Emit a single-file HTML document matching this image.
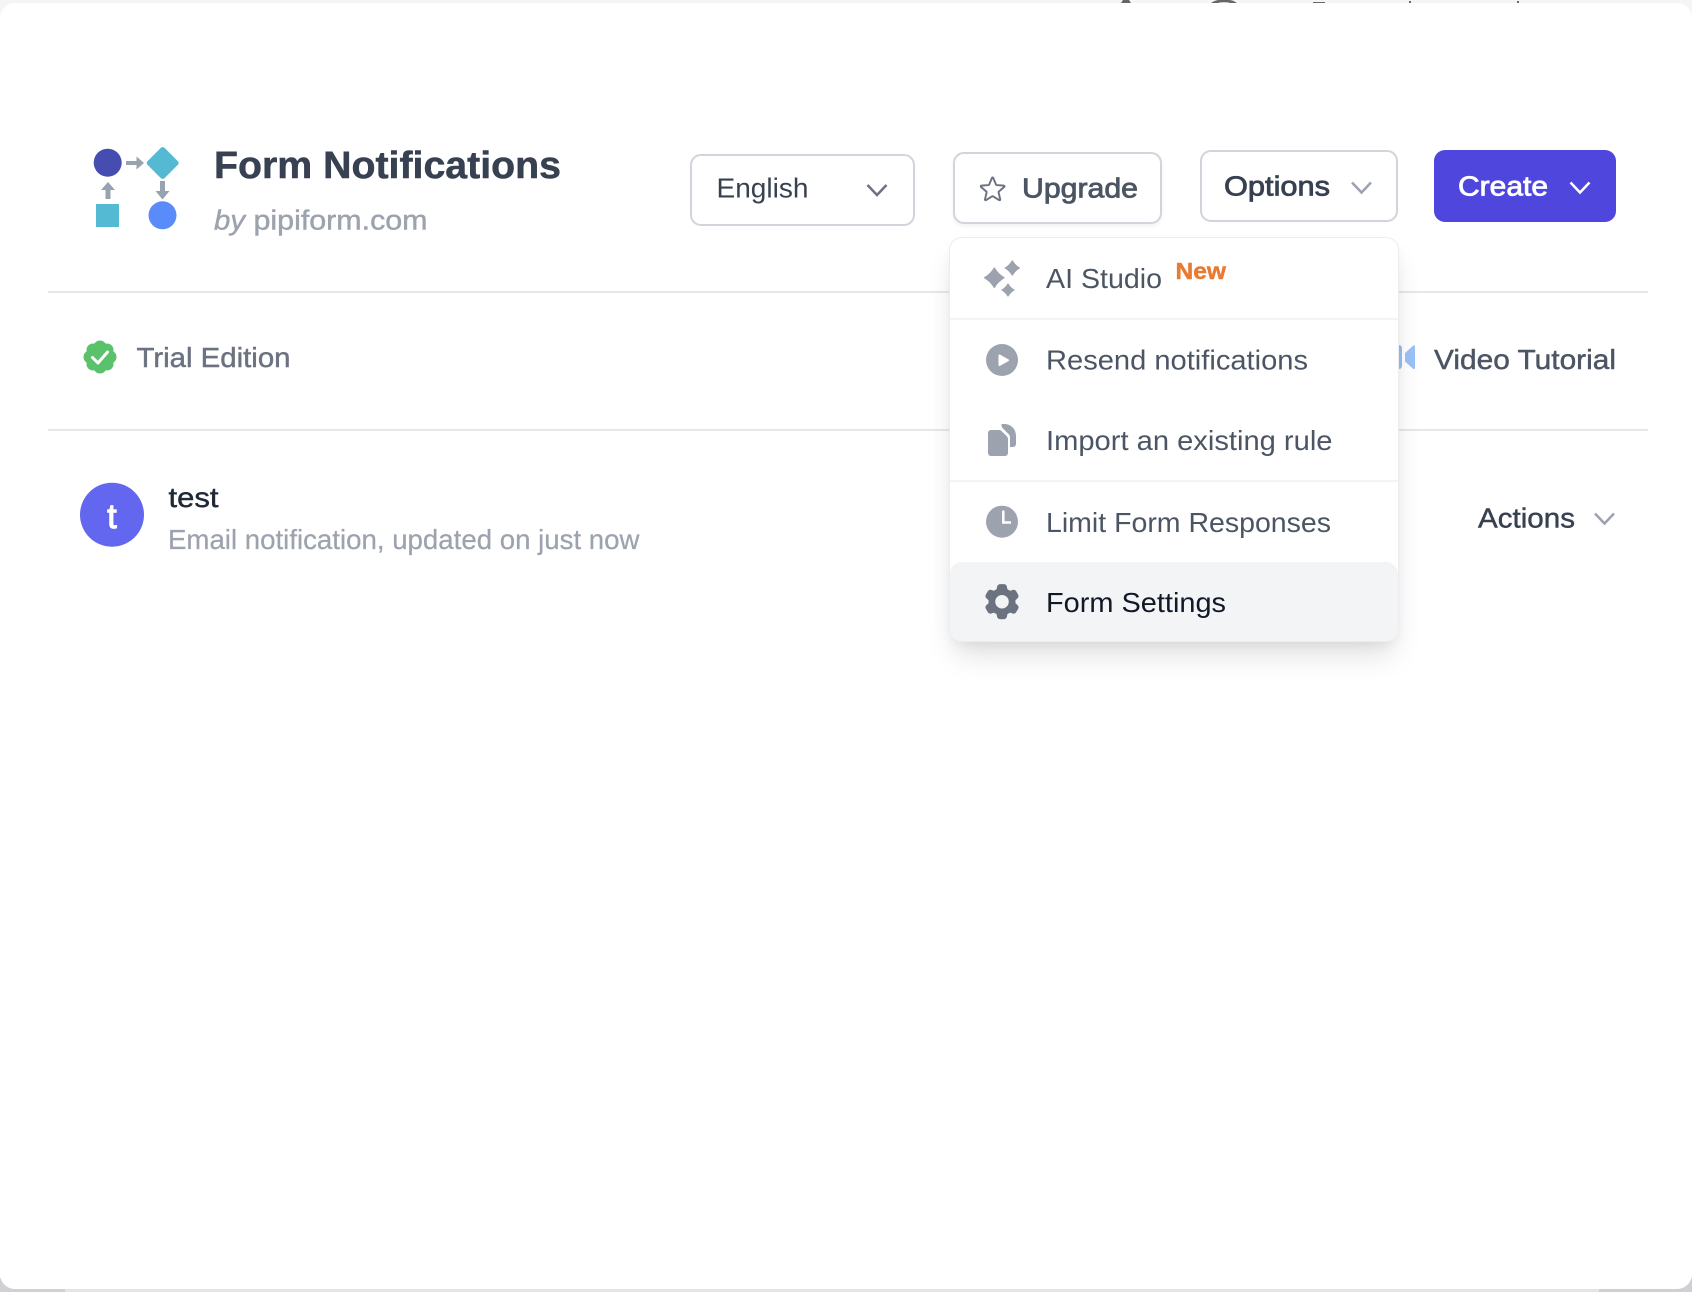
<!DOCTYPE html>
<html lang="en"><head><meta charset="utf-8"><title>Form Notifications</title>
<style>
html,body{margin:0;padding:0;width:1692px;height:1292px;overflow:hidden;background:#f5f5f6}
body{position:relative;font-family:"Liberation Sans",sans-serif}
.bl,.br,.bm{position:absolute;bottom:0;height:14px}
.bl{left:0;width:65px;background:#d0d0d5}.bm{left:65px;width:1534px;background:#e4e4e5}.br{left:1599px;width:93px;background:#cfcfd6}
.panel{position:absolute;left:0;top:3px;width:1692px;height:1286px;background:#fff;border-radius:15px}
.line{position:absolute;left:48px;width:1600px;height:2px;background:#e5e7eb}
.btn{position:absolute;box-sizing:border-box;background:#fff;border:2px solid #d1d5db;border-radius:11px}
.menu{position:absolute;left:949px;top:237px;width:450px;height:405px;box-sizing:border-box;background:#fff;border:1.5px solid #ededef;border-radius:13px;box-shadow:0 18px 30px -6px rgba(0,0,0,.13),0 6px 12px -3px rgba(0,0,0,.06)}
.sep{position:absolute;left:0;right:0;height:2px;background:#f3f4f6}
.hi{position:absolute;left:0;right:0;bottom:0;height:79.500px;background:#f3f4f6;border-radius:12px}
svg{position:absolute;left:0;top:0}
text{font-family:"Liberation Sans",sans-serif;font-size:28px}
.m{stroke-width:.45px}
.s{stroke-width:.8px}
</style></head><body>
<div class="bl"></div><div class="bm"></div><div class="br"></div>
<div class="panel"></div>
<div class="line" style="top:291px"></div>
<div class="line" style="top:429px"></div>

<!-- behind menu -->
<svg width="1692" height="1292" viewBox="0 0 1692 1292">
<g fill="#666"><path d="M1121 3l2-3h6l2 3z"/><path d="M1211 3c3-2 6-3 8-3h10c3 0 5 1 8 3h-7c-2-1-10-1-12 0z"/><rect x="1313" y="2" width="12" height="1"/><rect x="1409" y="1" width="2" height="2"/><rect x="1517" y="1" width="2" height="2"/></g>
<path d="M1390 345h9a3 3 0 0 1 3 3v18a3 3 0 0 1-3 3h-9z" fill="#93c0f5"/>
<path d="M1415 346.500v21.500c0 1-1 1.500-2 .8l-8-7.300v-8.500l8-7.300c1-.7 2-.2 2 .3z" fill="#9ac2f6"/>
</svg>

<div class="btn" style="left:690px;top:154px;width:225px;height:72px"></div>
<div class="btn" style="left:953px;top:152px;width:209px;height:72px;box-shadow:0 2px 4px rgba(0,0,0,.06)"></div>
<div class="btn" style="left:1200px;top:150px;width:198px;height:72px"></div>
<div class="btn" style="left:1434px;top:150px;width:182px;height:72px;background:#4f46dd;border:0"></div>

<div class="menu">
<div class="sep" style="top:80px"></div>
<div class="sep" style="top:241.500px"></div>
<div class="hi"></div>
</div>

<svg width="1692" height="1292" viewBox="0 0 1692 1292">
<!-- logo -->
<ellipse cx="107.700" cy="162.700" rx="14" ry="14" fill="#454eb0"/>
<rect x="-12" y="-12" width="24" height="24" rx="2.500" transform="translate(162.700 163) rotate(45)" fill="#54b9d2"/>
<rect x="96" y="204" width="23" height="23" fill="#54b9d2"/>
<circle cx="162.500" cy="215.300" r="14" fill="#5a8bfb"/>
<g fill="#97a3ae">
<path d="M126 161h10.500v-4.500l7.500 6.500-7.500 6.500v-4.500h-10.500z"/>
<path d="M105.500 199v-9h-4.500l7-8 7 8h-4.500v9z"/>
<path d="M160 181h5v10h4.500l-7 8.500-7-8.500h4.500z"/>
</g>
<!-- title -->
<text x="214" y="178" font-size="38" font-weight="700" fill="#374151" stroke="#374151" stroke-width=".5" style="font-size:38px" textLength="347" lengthAdjust="spacingAndGlyphs">Form Notifications</text>
<text x="214" y="229.500" fill="#9ca3af" stroke="#9ca3af" class="m" font-style="italic" textLength="31" lengthAdjust="spacingAndGlyphs">by</text>
<text x="253.500" y="229.500" fill="#9ca3af" stroke="#9ca3af" class="m" textLength="174" lengthAdjust="spacingAndGlyphs">pipiform.com</text>

<!-- English -->
<text x="716.500" y="197.500" fill="#374151" textLength="92" lengthAdjust="spacingAndGlyphs">English</text>
<path d="M867.500 185l9.500 10 9.500-10" fill="none" stroke="#6b7280" stroke-width="2.500"/>
<!-- Upgrade -->
<path transform="translate(977 173.400) scale(1.300)" d="M11.480 3.499a.562.562 0 011.040 0l2.125 5.111a.563.563 0 00.475.345l5.518.442c.499.040.701.663.321.988l-4.204 3.602a.563.563 0 00-.182.557l1.285 5.385a.562.562 0 01-.840.610l-4.725-2.885a.562.562 0 00-.586 0L6.982 20.540a.562.562 0 01-.840-.610l1.285-5.386a.562.562 0 00-.182-.557l-4.204-3.602a.563.563 0 01.321-.988l5.518-.442a.563.563 0 00.475-.345L11.480 3.500z" fill="none" stroke="#6b7280" stroke-width="1.500"/>
<text x="1022" y="197.500" fill="#4b5563" stroke="#4b5563" class="s" textLength="116" lengthAdjust="spacingAndGlyphs">Upgrade</text>
<!-- Options -->
<text x="1224" y="195.500" fill="#374151" stroke="#374151" class="s" textLength="106" lengthAdjust="spacingAndGlyphs">Options</text>
<path d="M1352 182.500l9.500 10 9.500-10" fill="none" stroke="#9ca3af" stroke-width="2.500"/>
<!-- Create -->
<text x="1458" y="195.500" fill="#fff" stroke="#fff" class="s" textLength="90" lengthAdjust="spacingAndGlyphs">Create</text>
<path d="M1570.500 182.500l9.500 10 9.500-10" fill="none" stroke="#fff" stroke-width="2.500"/>

<!-- Trial -->
<g fill="#5ac26a"><circle cx="100" cy="357" r="14"/>
<circle cx="100" cy="347" r="6.500"/><circle cx="107" cy="350" r="6.500"/><circle cx="110" cy="357" r="6.500"/><circle cx="107" cy="364" r="6.500"/><circle cx="100" cy="367" r="6.500"/><circle cx="93" cy="364" r="6.500"/><circle cx="90" cy="357" r="6.500"/><circle cx="93" cy="350" r="6.500"/></g>
<path d="M92.500 357.500l5.500 5.500 9.500-11" fill="none" stroke="#fff" stroke-width="3" stroke-linecap="round" stroke-linejoin="round"/>
<text x="136.500" y="367" fill="#6b7280" stroke="#6b7280" class="m" textLength="154" lengthAdjust="spacingAndGlyphs">Trial Edition</text>
<text x="1434" y="369" fill="#4b5563" stroke="#4b5563" class="m" textLength="182" lengthAdjust="spacingAndGlyphs">Video Tutorial</text>

<!-- list row -->
<circle cx="112" cy="514.700" r="32" fill="#6366ee"/>
<text x="112" y="528" text-anchor="middle" fill="#fff" stroke="#fff" stroke-width="1.200" style="font-size:34px">t</text>
<text x="168.500" y="507" fill="#1f2937" stroke="#1f2937" class="m" textLength="50" lengthAdjust="spacingAndGlyphs">test</text>
<text x="168" y="549" fill="#9ca3af" stroke="#9ca3af" stroke-width=".25" textLength="471.500" lengthAdjust="spacingAndGlyphs">Email notification, updated on just now</text>
<text x="1478" y="527.500" fill="#374151" stroke="#374151" class="m" textLength="97" lengthAdjust="spacingAndGlyphs">Actions</text>
<path d="M1595 513.500l9.500 10 9.500-10" fill="none" stroke="#9ca3af" stroke-width="2.500"/>

<!-- menu icons -->
<g fill="#9ca3af" stroke="#9ca3af" stroke-width="1.500" stroke-linejoin="round">
<path transform="translate(994.300 277.700)" d="M0-9.500Q3.500-3.500 9.500 0Q3.500 3.500 0 9.500Q-3.500 3.500-9.500 0Q-3.500-3.500 0-9.500Z"/>
<path transform="translate(1012.300 268) scale(.75)" d="M0-9.500Q3.500-3.500 9.500 0Q3.500 3.500 0 9.500Q-3.500 3.500-9.500 0Q-3.500-3.500 0-9.500Z"/>
<path transform="translate(1008 290) scale(.65)" d="M0-9.500Q3.500-3.500 9.500 0Q3.500 3.500 0 9.500Q-3.500 3.500-9.500 0Q-3.500-3.500 0-9.500Z"/>
</g>
<circle cx="1002" cy="360" r="16" fill="#9ca3af"/>
<path d="M998.500 355.500c0-.8.800-1.300 1.500-.9l8.500 4.800c.7.400.7 1.300 0 1.700l-8.500 4.800c-.7.400-1.500-.100-1.500-.9z" fill="#fff"/>
<path d="M991 430h8c1 0 2 .5 2.500 1l5.500 5.500c.6.600 1 1.500 1 2.500v14a3 3 0 0 1-3 3h-14a3 3 0 0 1-3-3v-20a3 3 0 0 1 3-3z" fill="#9ca3af"/>
<path d="M1001.500 424h2.500c7 0 12 5 12 12v8a3 3 0 0 1-3 3h-3v-9c0-2-.5-3-1.500-4l-6-6c-1-1-1-2.500-1-4z" fill="#9ca3af"/>
<circle cx="1002" cy="521.700" r="16" fill="#9ca3af"/>
<path d="M1003.300 510.500v12h7.700" fill="none" stroke="#fff" stroke-width="2.500"/>
<path transform="translate(980.400 580.100) scale(1.800)" fill="#6b7280" fill-rule="evenodd" d="M11.078 2.250c-.917 0-1.699.663-1.850 1.567L9.050 4.889c-.020.120-.115.260-.297.348a7.493 7.493 0 00-.986.570c-.166.115-.334.126-.450.083L6.300 5.508a1.875 1.875 0 00-2.282.819l-.922 1.597a1.875 1.875 0 00.432 2.385l.840.692c.095.078.170.229.154.430a7.598 7.598 0 000 1.139c.015.200-.059.352-.153.430l-.841.692a1.875 1.875 0 00-.432 2.385l.922 1.597a1.875 1.875 0 002.282.818l1.019-.382c.115-.043.283-.031.450.082.312.214.641.405.985.570.182.088.277.228.297.350l.178 1.071c.151.904.933 1.567 1.850 1.567h1.844c.916 0 1.699-.663 1.850-1.567l.178-1.072c.020-.120.114-.260.297-.349.344-.165.673-.356.985-.570.167-.114.335-.125.450-.082l1.020.382a1.875 1.875 0 002.280-.819l.923-1.597a1.875 1.875 0 00-.432-2.385l-.840-.692c-.095-.078-.170-.229-.154-.430a7.614 7.614 0 000-1.139c-.016-.200.059-.352.153-.430l.840-.692c.708-.582.891-1.590.433-2.385l-.922-1.597a1.875 1.875 0 00-2.282-.818l-1.020.382c-.114.043-.282.031-.449-.083a7.490 7.490 0 00-.985-.570c-.183-.087-.277-.227-.297-.348l-.179-1.072a1.875 1.875 0 00-1.850-1.567h-1.843zM12 15.750a3.750 3.750 0 100-7.500 3.750 3.750 0 000 7.500z"/>

<!-- menu text -->
<text x="1046" y="288" fill="#4b5563" textLength="116" lengthAdjust="spacingAndGlyphs">AI Studio</text>
<text x="1175.500" y="279" fill="#ea7a30" stroke="#ea7a30" class="m" style="font-size:23px" font-weight="700" textLength="50.500" lengthAdjust="spacingAndGlyphs">New</text>
<text x="1046" y="369.500" fill="#4b5563" textLength="262" lengthAdjust="spacingAndGlyphs">Resend notifications</text>
<text x="1046" y="450" fill="#4b5563" textLength="286.500" lengthAdjust="spacingAndGlyphs">Import an existing rule</text>
<text x="1046" y="532" fill="#4b5563" textLength="285" lengthAdjust="spacingAndGlyphs">Limit Form Responses</text>
<text x="1046" y="612" fill="#111827" textLength="180" lengthAdjust="spacingAndGlyphs">Form Settings</text>
</svg>
</body></html>
